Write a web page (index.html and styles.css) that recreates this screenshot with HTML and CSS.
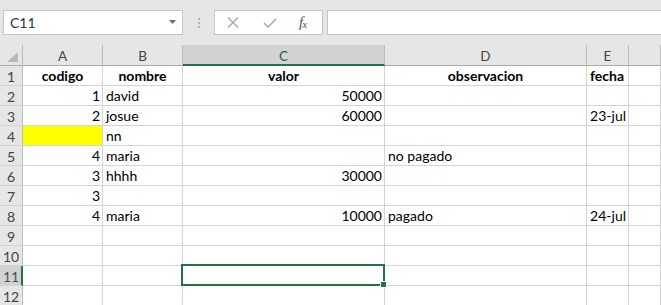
FILE: index.html
```html
<!DOCTYPE html>
<html lang="es">
  <head>
    <meta charset="UTF-8" />
    <meta name="viewport" content="width=device-width, initial-scale=1.0" />
    <title>Libro1 - Excel</title>
    <link rel="stylesheet" href="styles.css">
  </head>
  <body>
    <div class="formula-bar">
      <div class="name-box">
        <span>C11</span>
        <svg class="name-arrow" width="7" height="4" viewBox="0 0 7 4">
          <polygon points="0 0 7 0 3.5 4" fill="#6f6f6f"></polygon>
        </svg>
      </div>

      <div class="grip">
        <svg width="2" height="10" viewBox="0 0 2 10">
          <rect x="0" y="0" width="2" height="2" fill="#b4b4b4"></rect>
          <rect x="0" y="4" width="2" height="2" fill="#b4b4b4"></rect>
          <rect x="0" y="8" width="2" height="2" fill="#b4b4b4"></rect>
        </svg>
      </div>

      <div class="fx-buttons">
        <svg class="fx-icon" width="12" height="11" viewBox="0 0 12 11">
          <line x1="1" y1="0.5" x2="11" y2="10.5" stroke="#a9a9a9" stroke-width="1.4"></line>
          <line x1="11" y1="0.5" x2="1" y2="10.5" stroke="#a9a9a9" stroke-width="1.4"></line>
        </svg>
        <svg class="fx-icon" width="14" height="10" viewBox="0 0 14 10">
          <polyline points="1 5 5 9 13 1" fill="none" stroke="#a9a9a9" stroke-width="1.6"></polyline>
        </svg>
        <span class="fx-label">f<sub>x</sub></span>
      </div>

      <div class="formula-input"></div>
    </div>

    <div class="sheet">
      <!-- column headers -->
      <div class="corner"><span class="corner-mark"></span></div>
      <div class="col-head">A</div>
      <div class="col-head">B</div>
      <div class="col-head active">C</div>
      <div class="col-head">D</div>
      <div class="col-head">E</div>
      <div class="col-head"></div>

      <div class="row-head">1</div>
      <div class="cell bold center">codigo</div>
      <div class="cell bold center">nombre</div>
      <div class="cell bold center">valor</div>
      <div class="cell bold center">observacion</div>
      <div class="cell bold">fecha</div>
      <div class="cell"></div>

      <div class="row-head">2</div>
      <div class="cell num">1</div>
      <div class="cell">david</div>
      <div class="cell num">50000</div>
      <div class="cell"></div>
      <div class="cell"></div>
      <div class="cell"></div>

      <div class="row-head">3</div>
      <div class="cell num">2</div>
      <div class="cell">josue</div>
      <div class="cell num">60000</div>
      <div class="cell"></div>
      <div class="cell num">23-jul</div>
      <div class="cell"></div>

      <div class="row-head">4</div>
      <div class="cell fill-yellow"></div>
      <div class="cell">nn</div>
      <div class="cell"></div>
      <div class="cell"></div>
      <div class="cell"></div>
      <div class="cell"></div>

      <div class="row-head">5</div>
      <div class="cell num">4</div>
      <div class="cell">maria</div>
      <div class="cell"></div>
      <div class="cell">no pagado</div>
      <div class="cell"></div>
      <div class="cell"></div>

      <div class="row-head">6</div>
      <div class="cell num">3</div>
      <div class="cell">hhhh</div>
      <div class="cell num">30000</div>
      <div class="cell"></div>
      <div class="cell"></div>
      <div class="cell"></div>

      <div class="row-head">7</div>
      <div class="cell num">3</div>
      <div class="cell"></div>
      <div class="cell"></div>
      <div class="cell"></div>
      <div class="cell"></div>
      <div class="cell"></div>

      <div class="row-head">8</div>
      <div class="cell num">4</div>
      <div class="cell">maria</div>
      <div class="cell num">10000</div>
      <div class="cell">pagado</div>
      <div class="cell num">24-jul</div>
      <div class="cell"></div>

      <div class="row-head">9</div>
      <div class="cell"></div>
      <div class="cell"></div>
      <div class="cell"></div>
      <div class="cell"></div>
      <div class="cell"></div>
      <div class="cell"></div>

      <div class="row-head">10</div>
      <div class="cell"></div>
      <div class="cell"></div>
      <div class="cell"></div>
      <div class="cell"></div>
      <div class="cell"></div>
      <div class="cell"></div>

      <div class="row-head active">11</div>
      <div class="cell"></div>
      <div class="cell"></div>
      <div class="cell selected"><span class="selection"><span class="fill-handle"></span></span></div>
      <div class="cell"></div>
      <div class="cell"></div>
      <div class="cell"></div>

      <div class="row-head">12</div>
      <div class="cell"></div>
      <div class="cell"></div>
      <div class="cell"></div>
      <div class="cell"></div>
      <div class="cell"></div>
      <div class="cell"></div>
    </div>
  </body>
</html>
```

FILE: styles.css
```css
:root {
  --chrome-bg: #e6e6e6;
  --header-active: #d2d2d2;
  --box-border: #c6c6c6;
  --grid-line: #d4d4d4;
  --header-line: #bcbcbc;
  --header-bottom: #ababab;
  --excel-green: #217346;
  --text-color: #000000;
  --header-text: #444444;
}

* {
  margin: 0;
  padding: 0;
  box-sizing: border-box;
}

body {
  width: 661px;
  height: 305px;
  overflow: hidden;
  background-color: #ffffff;
  font-family: Lato, "Liberation Sans", sans-serif;
  color: var(--text-color);
}

/* Formula bar */
.formula-bar {
  height: 45px;
  padding: 10px 0 10px 3px;
  background-color: var(--chrome-bg);
  display: flex;
  align-items: stretch;
}

.name-box {
  width: 180px;
  background-color: #ffffff;
  border: 1px solid var(--box-border);
  display: flex;
  align-items: center;
  justify-content: space-between;
  padding: 0 6px 0 6px;
  font-size: 14px;
  color: #333333;
}

.name-arrow {
  margin-top: -2px;
}

.grip {
  width: 31px;
  display: flex;
  align-items: center;
  justify-content: center;
  padding-left: 1px;
}

.fx-buttons {
  width: 109px;
  background-color: #ffffff;
  border: 1px solid var(--box-border);
  display: flex;
  align-items: center;
  padding: 0 0 0 12px;
  gap: 24px;
}

.fx-label {
  font-family: "Liberation Serif", "DejaVu Serif", serif;
  font-style: italic;
  font-size: 15px;
  color: #555555;
  margin-left: -2px;
  letter-spacing: -1px;
}

.fx-label sub {
  font-size: 11px;
  vertical-align: -1px;
}

.formula-input {
  flex: 1;
  margin-left: 4px;
  background-color: #ffffff;
  border: 1px solid var(--box-border);
  border-right: none;
}

/* Sheet grid */
.sheet {
  display: grid;
  grid-template-columns: 23px 80px 80px 202px 202px 42px 1fr;
  grid-template-rows: 21px repeat(12, 20px);
}

.corner,
.col-head,
.row-head {
  background-color: var(--chrome-bg);
  color: var(--header-text);
  font-size: 13.5px;
  display: flex;
  align-items: center;
  justify-content: center;
}

.corner {
  position: relative;
  border-right: 1px solid var(--header-line);
  border-bottom: 1px solid var(--header-bottom);
}

.corner-mark {
  position: absolute;
  right: 4px;
  bottom: 3px;
  width: 0;
  height: 0;
  border-left: 11px solid transparent;
  border-bottom: 10px solid #b9b9b9;
}

.col-head {
  border-right: 1px solid var(--header-line);
  border-bottom: 1px solid var(--header-bottom);
  padding-top: 2px;
}

.col-head.active {
  background-color: var(--header-active);
  border-bottom: 2px solid var(--excel-green);
  color: #3c5a48;
  padding-top: 3px;
}

.row-head {
  border-right: 1px solid var(--header-line);
  border-bottom: 1px solid var(--grid-line);
  font-size: 14px;
  padding-top: 1px;
}

.row-head.active {
  background-color: var(--header-active);
  border-right: 2px solid var(--excel-green);
  color: #3c5a48;
  padding-left: 1px;
}

.cell {
  border-right: 1px solid var(--grid-line);
  border-bottom: 1px solid var(--grid-line);
  font-size: 14px;
  line-height: 19px;
  padding: 0 3px;
  white-space: nowrap;
  display: flex;
  align-items: center;
}

.cell.bold {
  font-weight: 700;
}

.cell.center {
  justify-content: center;
}

.cell.num {
  justify-content: flex-end;
  padding-right: 2px;
}

.cell.fill-yellow {
  background-color: #ffff00;
}

/* Active cell outline */
.cell.selected {
  position: relative;
}

.selection {
  position: absolute;
  top: -2px;
  left: -2px;
  right: -1px;
  bottom: -1px;
  border: 2px solid var(--excel-green);
}

.fill-handle {
  position: absolute;
  right: -4px;
  bottom: -4px;
  width: 7px;
  height: 7px;
  background-color: var(--excel-green);
  border: 1px solid #ffffff;
}
```
